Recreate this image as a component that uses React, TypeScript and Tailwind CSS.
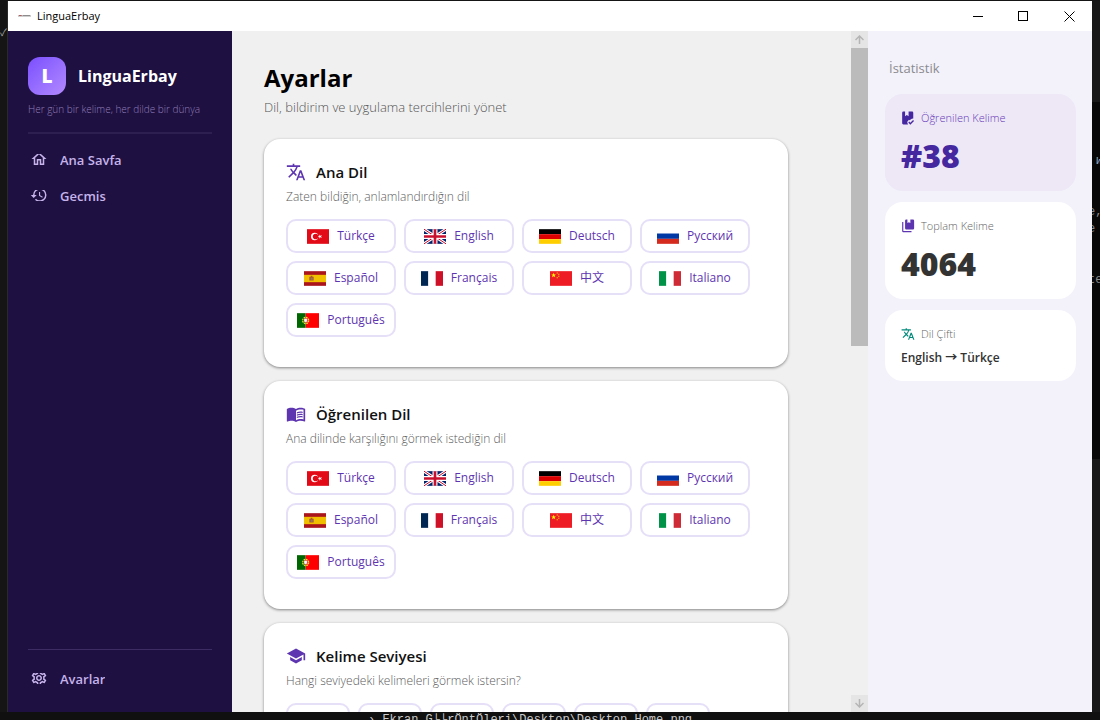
import type { ReactNode } from "react";
import {
  MdHistory,
  MdMenuBook,
  MdOutlineHome,
  MdOutlineSettings,
  MdSchool,
  MdTranslate,
} from "react-icons/md";

type Language = {
  code: string;
  label: string;
};

const LANGUAGES: Language[] = [
  { code: "tr", label: "Türkçe" },
  { code: "gb", label: "English" },
  { code: "de", label: "Deutsch" },
  { code: "ru", label: "Русский" },
  { code: "es", label: "Español" },
  { code: "fr", label: "Français" },
  { code: "cn", label: "中文" },
  { code: "it", label: "Italiano" },
  { code: "pt", label: "Português" },
];

const LEVELS = ["A1", "A2", "B1", "B2", "C1", "C2"];

// Flag artwork on a 66x44 grid
const FLAGS: Record<string, ReactNode> = {
  tr: (
    <>
      <path fill="#e30a17" d="M0 0h66v44H0z" />
      <circle cx="23" cy="22" r="11" fill="#fff" />
      <circle cx="26" cy="22" r="8.5" fill="#e30a17" />
      <path fill="#fff" d="M32 22l5-1.600V16l3 4 5-1.600L42 22l3 4-5-1.600-3 4v-4.800z" />
    </>
  ),
  gb: (
    <>
      <path fill="#012169" d="M0 0h66v44H0z" />
      <path stroke="#fff" strokeWidth="9" d="M0 0l66 44M66 0L0 44" />
      <path stroke="#c8102e" strokeWidth="3" d="M0 0l66 44M66 0L0 44" />
      <path stroke="#fff" strokeWidth="15" d="M33 0v44M0 22h66" />
      <path stroke="#c8102e" strokeWidth="8" d="M33 0v44M0 22h66" />
    </>
  ),
  de: (
    <>
      <path d="M0 0h66v15H0z" />
      <path fill="#d00" d="M0 15h66v15H0z" />
      <path fill="#ffce00" d="M0 30h66v14H0z" />
    </>
  ),
  ru: (
    <>
      <path fill="#fff" d="M0 0h66v15H0z" />
      <path fill="#0039a6" d="M0 13h66v16H0z" />
      <path fill="#d52b1e" d="M0 29h66v15H0z" />
    </>
  ),
  es: (
    <>
      <path fill="#aa151b" d="M0 0h66v44H0z" />
      <path fill="#f1bf00" d="M0 11h66v22H0z" />
      <path fill="#ad5a2a" d="M16 17h4v-3h5v3h4v11H16z" />
      <path fill="#8c7a6a" d="M20 20h6v6h-6z" />
    </>
  ),
  fr: (
    <>
      <path fill="#002654" d="M0 0h22v44H0z" />
      <path fill="#fff" d="M22 0h22v44H22z" />
      <path fill="#ce1126" d="M44 0h22v44H44z" />
    </>
  ),
  cn: (
    <>
      <path fill="#ee1c25" d="M0 0h66v44H0z" />
      <path fill="#ff0" d="M11 5l2 5h5l-4 3 2 5-5-3-5 3 2-5-4-3h5z" />
      <path fill="#ff0" d="M20 4h3v3h-3zM25 8h3v3h-3zM25 14h3v3h-3zM20 18h3v3h-3z" />
    </>
  ),
  it: (
    <>
      <path fill="#009246" d="M0 0h22v44H0z" />
      <path fill="#fff" d="M22 0h22v44H22z" />
      <path fill="#ce2b37" d="M44 0h22v44H44z" />
    </>
  ),
  pt: (
    <>
      <path fill="#060" d="M0 0h26v44H0z" />
      <path fill="red" d="M26 0h40v44H26z" />
      <circle cx="26" cy="22" r="9" fill="none" stroke="#e8e337" strokeWidth="4" strokeDasharray="5 2" />
      <path fill="#fff" stroke="#c00" strokeWidth="1" d="M21 16h10v8q-5 7-10 0z" />
    </>
  ),
};

function Flag({ code }: { code: string }) {
  return (
    <svg viewBox="0 0 66 44" className="h-[15px] w-[22px] shrink-0" aria-hidden>
      {FLAGS[code]}
    </svg>
  );
}

function BookCheckIcon() {
  return (
    <svg viewBox="0 0 24 24" className="size-[14px] shrink-0 fill-[#4527a0]" aria-hidden>
      <path d="M4 1h3v8l3-2 3 2V1h6a2 2 0 0 1 2 2v10a7 7 0 0 0-4 1l-2 2-1.500-1-3 4 1.500 4H4a2 2 0 0 1-2-2V3a2 2 0 0 1 2-2z" />
      <path d="M16 23.500l-3.500-3.700 1.600-1.600 1.900 1.900 4.700-4.700 1.600 1.700z" />
    </svg>
  );
}

function BooksIcon() {
  return (
    <svg viewBox="0 0 24 24" className="size-[14px] shrink-0 fill-[#5e35b1]" aria-hidden>
      <path d="M20.500 18H9a2 2 0 0 1-2-2V3a2 2 0 0 1 2-2h2v6l2.500-1.500L16 7V1h4.500a2 2 0 0 1 2 2v13a2 2 0 0 1-2 2zM18 20.500v2H4a2 2 0 0 1-2-2V5h2v15.500z" />
    </svg>
  );
}

function TitleBar() {
  const control = "flex h-full w-[46px] items-center justify-center";
  return (
    <header className="flex h-[30px] shrink-0 items-center bg-white pl-2.5">
      <svg viewBox="0 0 14 4" className="mr-1.5 h-1 w-[13px]" aria-hidden>
        <path fill="#ccc" d="M0 1h14v2H0z" />
        <path fill="#a55" d="M1 1h3v1H1z" />
        <path fill="#888" d="M5 1h8v1H5z" />
      </svg>
      <span className="text-[11px] leading-4 text-black">LinguaErbay</span>
      <div className="ml-auto flex h-full">
        <button type="button" aria-label="Küçült" className={control}>
          <svg viewBox="0 0 11 11" className="size-[11px]" shapeRendering="crispEdges">
            <path stroke="#000" d="M1 5.500h10" />
          </svg>
        </button>
        <button type="button" aria-label="Büyüt" className={control}>
          <svg viewBox="0 0 11 11" className="size-[11px]" shapeRendering="crispEdges">
            <path fill="none" stroke="#000" d="M.5.5h9v9h-9z" />
          </svg>
        </button>
        <button type="button" aria-label="Kapat" className={control}>
          <svg viewBox="0 0 11 11" className="size-[11px]">
            <path stroke="#000" d="M.5.5l10 10M10.500.5l-10 10" />
          </svg>
        </button>
      </div>
    </header>
  );
}

function NavItem({ icon, label }: { icon: ReactNode; label: string }) {
  return (
    <a href="#" className="flex h-9 items-center gap-3 pl-0.5 text-[#c5b3ea]">
      <span className="flex h-[11px] w-[18px] items-center overflow-hidden">{icon}</span>
      {/* The row is shorter than the font, so descenders are cut off */}
      <span className="h-[11px] overflow-hidden text-[13px] leading-[12px] font-semibold">{label}</span>
    </a>
  );
}

function Sidebar() {
  return (
    <aside className="flex w-56 shrink-0 flex-col bg-[#1e1040] px-5 pt-[26px] pb-4">
      <div className="flex items-center gap-3">
        <div className="flex size-[38px] items-center justify-center rounded-xl bg-gradient-to-br from-[#7c4dff] to-[#b388ff] text-[19px] font-extrabold text-white">
          L
        </div>
        <span className="text-[16px] font-bold text-white">LinguaErbay</span>
      </div>
      <p className="mt-1.5 text-[10px] leading-4 font-light whitespace-nowrap text-[#8f7cb8]">
        Her gün bir kelime, her dilde bir dünya
      </p>
      <hr className="mt-[15px] mb-[7px] border-t-2 border-[#2d2050]" />
      <nav>
        <NavItem icon={<MdOutlineHome className="size-[18px] shrink-0" />} label="Ana Sayfa" />
        <NavItem icon={<MdHistory className="size-[18px] shrink-0" />} label="Geçmiş" />
      </nav>
      <nav className="mt-auto border-t border-[#3d2c63] pt-2.5">
        <NavItem icon={<MdOutlineSettings className="size-[18px] shrink-0" />} label="Ayarlar" />
      </nav>
    </aside>
  );
}

function SettingsCard({
  icon,
  title,
  description,
  children,
}: {
  icon: ReactNode;
  title: string;
  description: string;
  children: ReactNode;
}) {
  return (
    <section className="w-full max-w-[524px] shrink-0 rounded-2xl bg-white px-[22px] pt-[21px] pb-[30px] shadow-[0_1px_3px_rgba(0,0,0,0.45)]">
      <h2 className="flex items-center gap-2.5 text-[15px] leading-6 font-semibold text-[#111]">
        {icon}
        {title}
      </h2>
      <p className="mt-1 text-[12px] leading-[18px] font-light text-[#5c5c5c]">{description}</p>
      <div className="mt-[13px] flex flex-wrap gap-2">{children}</div>
    </section>
  );
}

function LanguageButtons() {
  return LANGUAGES.map((language) => (
    <button
      key={language.code}
      type="button"
      className="flex h-[34px] min-w-[110px] items-center justify-center gap-2 rounded-[10px] border-2 border-[#e6dff8] px-2 text-[12px] text-[#5e35b1]"
    >
      <Flag code={language.code} />
      {language.label}
    </button>
  ));
}

function ScrollArrow({ down = false }: { down?: boolean }) {
  return (
    <button
      type="button"
      aria-label={down ? "Aşağı kaydır" : "Yukarı kaydır"}
      className="flex size-[17px] items-center justify-center bg-[#e5e5e5]"
    >
      <svg viewBox="0 0 9 9" className="size-[9px]" fill="none" stroke="#b5b5b5" strokeWidth="1.500">
        <path d={down ? "M4.500 0v8M.5 4l4 4 4-4" : "M4.500 9V1M.5 5l4-4 4 4"} />
      </svg>
    </button>
  );
}

function StatsPanel() {
  return (
    <aside className="flex w-56 shrink-0 flex-col gap-[11px] bg-[#f3f2fa] px-4 pt-7 pl-[17px]">
      <h2 className="mb-[5px] pl-1 text-[13px] leading-[19px] font-medium text-[#8a8a8f]">İstatistik</h2>
      <section className="rounded-[18px] bg-[#ede7f6] px-4 pt-[15px] pb-[15px]">
        <h3 className="flex items-center gap-1.5 text-[11px] leading-[18px] font-light text-[#673ab7]">
          <BookCheckIcon />
          Öğrenilen Kelime
        </h3>
        <p className="mt-[9px] text-[32px] leading-10 font-extrabold text-[#4527a0]">#38</p>
      </section>
      <section className="rounded-[18px] bg-white px-4 pt-[15px] pb-[15px]">
        <h3 className="flex items-center gap-1.5 text-[11px] leading-[18px] font-light text-[#666]">
          <BooksIcon />
          Toplam Kelime
        </h3>
        <p className="mt-[9px] text-[32px] leading-10 font-extrabold text-[#333]">4064</p>
      </section>
      <section className="rounded-[18px] bg-white px-4 pt-[15px] pb-[14px]">
        <h3 className="flex items-center gap-1.5 text-[11px] leading-[18px] font-light text-[#666]">
          <MdTranslate className="size-[14px] text-[#00897b]" />
          Dil Çifti
        </h3>
        <p className="mt-1.5 text-[12px] leading-[18px] font-semibold text-[#333]">English → Türkçe</p>
      </section>
    </aside>
  );
}

// Slivers of the editor and terminal that show around the window
function EditorEdge() {
  return (
    <div className="w-2 shrink-0 overflow-hidden bg-[#181818] font-['Liberation_Mono',monospace] text-[12px] leading-[17px] whitespace-pre text-[#8a8a8a]">
      <div className="h-[101px]" />
      <div className="-ml-1 h-[357px] bg-[#080808] pt-[51px]">
        <p className="pl-2 text-[#8fa3b5] italic">w</p>
        <p className="mt-[34px]">e,</p>
        <p>e</p>
        <p className="mt-[34px]">te</p>
      </div>
    </div>
  );
}

export default function App() {
  return (
    <div className="flex h-screen flex-col overflow-hidden bg-[#151515] pt-px font-['Open_Sans','Noto_Sans','Noto_Sans_CJK_SC',sans-serif]">
      <div className="flex min-h-0 flex-1">
        <div className="w-2 shrink-0 overflow-hidden border-r border-[#2a2a2a] pt-6 text-[10px] text-[#aaa]">✓</div>
        <div className="flex min-w-0 flex-1 flex-col">
          <TitleBar />
          <div className="flex min-h-0 flex-1">
            <Sidebar />
            <main className="flex min-w-0 flex-1 flex-col gap-3.5 overflow-hidden bg-[#f0f0f0] px-8 pt-7">
              <div className="mb-2 shrink-0">
                <h1 className="text-[24px] leading-[38px] font-bold text-black">Ayarlar</h1>
                <p className="text-[13px] leading-5 font-light text-[#555]">
                  Dil, bildirim ve uygulama tercihlerini yönet
                </p>
              </div>
              <SettingsCard
                icon={<MdTranslate className="size-5 text-[#5e35b1]" />}
                title="Ana Dil"
                description="Zaten bildiğin, anlamlandırdığın dil"
              >
                <LanguageButtons />
              </SettingsCard>
              <SettingsCard
                icon={<MdMenuBook className="size-5 text-[#5e35b1]" />}
                title="Öğrenilen Dil"
                description="Ana dilinde karşılığını görmek istediğin dil"
              >
                <LanguageButtons />
              </SettingsCard>
              <SettingsCard
                icon={<MdSchool className="size-5 text-[#5e35b1]" />}
                title="Kelime Seviyesi"
                description="Hangi seviyedeki kelimeleri görmek istersin?"
              >
                {LEVELS.map((level) => (
                  <button
                    key={level}
                    type="button"
                    aria-label={level}
                    className="h-[34px] w-16 rounded-[10px] border-2 border-[#e6dff8]"
                  />
                ))}
              </SettingsCard>
            </main>
            <div className="flex w-[17px] shrink-0 flex-col bg-[#f0f0f0]">
              <ScrollArrow />
              <div className="min-h-0 flex-1">
                <div className="h-[46%] bg-[#bbb]" />
              </div>
              <ScrollArrow down />
            </div>
            <StatsPanel />
          </div>
        </div>
        <EditorEdge />
      </div>
      <footer className="h-2 shrink-0 overflow-hidden bg-[#101010] pt-0.5 pl-[368px] font-['Liberation_Mono',monospace] text-[12px] leading-[13px] whitespace-pre text-[#ccc]">
        {"› Ekran G└└rÖntÖleri\\Desktop\\Desktop_Home.png"}
      </footer>
    </div>
  );
}
